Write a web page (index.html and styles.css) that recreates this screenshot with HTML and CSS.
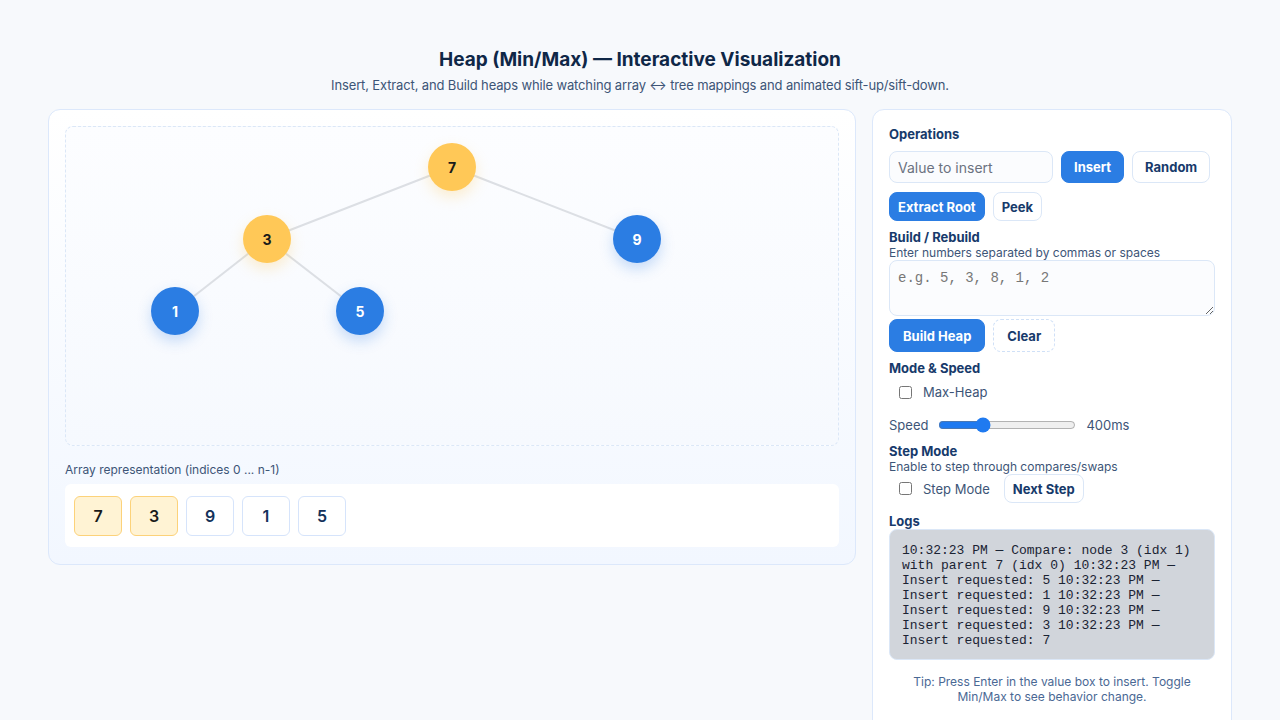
FILE: index.html
```html
<!DOCTYPE html>
<html lang="en">
<head>
<meta charset="utf-8">
<title>Heap (Min/Max) — Interactive Visualization</title>
<link rel="stylesheet" href="styles.css">
</head>
<body>
<header class="page-head">
  <h1 class="title">Heap (Min/Max) — Interactive Visualization</h1>
  <p class="subtitle">Insert, Extract, and Build heaps while watching array ↔ tree mappings and animated sift-up/sift-down.</p>
</header>
<main class="layout">
  <section class="viz-card">
    <div class="canvas">
      <svg class="edges" width="772" height="318" viewBox="0 0 772 318">
        <line x1="386" y1="40" x2="201" y2="112"/>
        <line x1="386" y1="40" x2="571" y2="112"/>
        <line x1="201" y1="112" x2="109" y2="184"/>
        <line x1="201" y1="112" x2="294" y2="184"/>
      </svg>
      <div class="node node-hl" style="left:362px;top:16px">7</div>
      <div class="node node-hl" style="left:177px;top:88px">3</div>
      <div class="node" style="left:547px;top:88px">9</div>
      <div class="node" style="left:85px;top:160px">1</div>
      <div class="node" style="left:270px;top:160px">5</div>
    </div>
    <div class="array-label">Array representation (indices 0 ... n-1)</div>
    <div class="array-box">
      <div class="cell cell-hl">7</div>
      <div class="cell cell-hl">3</div>
      <div class="cell">9</div>
      <div class="cell">1</div>
      <div class="cell">5</div>
    </div>
  </section>
  <aside class="panel">
    <h3 class="sec-title">Operations</h3>
    <div class="row row-first">
      <input class="text-input" type="text" placeholder="Value to insert">
      <button class="btn btn-primary btn-wide">Insert</button>
      <button class="btn btn-outline btn-wide">Random</button>
    </div>
    <div class="row row-second">
      <button class="btn btn-primary">Extract Root</button>
      <button class="btn btn-outline">Peek</button>
    </div>
    <h3 class="sec-title sec-build">Build / Rebuild</h3>
    <div class="hint">Enter numbers separated by commas or spaces</div>
    <textarea class="textarea" placeholder="e.g. 5, 3, 8, 1, 2"></textarea>
    <div class="row row-build">
      <button class="btn btn-primary btn-wide">Build Heap</button>
      <button class="btn btn-dashed btn-wide">Clear</button>
    </div>
    <h3 class="sec-title sec-mode">Mode &amp; Speed</h3>
    <label class="check-row"><input type="checkbox"> <span>Max-Heap</span></label>
    <div class="speed-row">
      <span>Speed</span>
      <input class="range" type="range" min="100" max="1100" value="400">
      <span>400ms</span>
    </div>
    <h3 class="sec-title sec-step">Step Mode</h3>
    <div class="hint">Enable to step through compares/swaps</div>
    <div class="step-row">
      <label class="check-row check-inline"><input type="checkbox"> <span>Step Mode</span></label>
      <button class="btn btn-outline">Next Step</button>
    </div>
    <h3 class="sec-title sec-logs">Logs</h3>
    <div class="logs">10:32:23 PM — Compare: node 3 (idx 1) with parent 7 (idx 0) 10:32:23 PM — Insert requested: 5 10:32:23 PM — Insert requested: 1 10:32:23 PM — Insert requested: 9 10:32:23 PM — Insert requested: 3 10:32:23 PM — Insert requested: 7</div>
    <p class="tip">Tip: Press Enter in the value box to insert. Toggle Min/Max to see behavior change.</p>
  </aside>
</main>
</body>
</html>
```

FILE: styles.css
```css
* { box-sizing: border-box; }
html, body { margin: 0; padding: 0; }
body {
  background: #f7f9fc;
  font-family: Inter, "Noto Sans", "Liberation Sans", sans-serif;
  color: #0f2a4a;
  min-height: 720px;
}
.page-head {
  text-align: center;
  padding-top: 48px;
}
.title {
  margin: 0;
  font-size: 19px;
  line-height: 24px;
  font-weight: 700;
  color: #0f2747;
}
.subtitle {
  margin: 5px 0 0;
  font-size: 13px;
  line-height: 16px;
  letter-spacing: -0.14px;
  color: #3d5577;
}
.layout {
  display: flex;
  gap: 16px;
  padding: 0 48px;
  margin-top: 16px;
  align-items: flex-start;
}
.viz-card {
  width: 808px;
  flex: none;
  border: 1px solid #dce8fb;
  border-radius: 12px;
  background: linear-gradient(180deg, #ffffff 0%, #f2f7ff 100%);
  padding: 16px 16px 17px;
}
.canvas {
  position: relative;
  height: 320px;
  border: 1px dashed #dbe7f7;
  border-radius: 8px;
  background: linear-gradient(180deg, #fcfdff 0%, #f6f9fe 100%);
}
.edges {
  position: absolute;
  left: 0;
  top: 0;
}
.edges line {
  stroke: #dcdfe4;
  stroke-width: 2;
}
.node {
  position: absolute;
  width: 48px;
  height: 48px;
  border-radius: 50%;
  background: #2b7de3;
  color: #ffffff;
  font-weight: 700;
  font-size: 14px;
  display: flex;
  align-items: center;
  justify-content: center;
  box-shadow: 0 6px 14px rgba(43, 125, 227, 0.25);
}
.node-hl {
  background: #ffc857;
  color: #1a1a1a;
  box-shadow: 0 6px 14px rgba(255, 200, 87, 0.28);
}
.array-label {
  margin-top: 16px;
  font-size: 12px;
  line-height: 16px;
  color: #3d5577;
}
.array-box {
  margin-top: 6px;
  background: #ffffff;
  border-radius: 6px;
  padding: 12px 9px 11px;
  display: flex;
  gap: 8px;
}
.cell {
  width: 48px;
  height: 40px;
  border: 1px solid #d6e4fb;
  border-radius: 6px;
  background: #ffffff;
  display: flex;
  align-items: center;
  justify-content: center;
  font-size: 16px;
  font-weight: 600;
  color: #14315a;
}
.cell-hl {
  background: #fff3d4;
  border-color: #fcd27a;
  color: #1a1a1a;
}
.panel {
  width: 360px;
  flex: none;
  background: #ffffff;
  border: 1px solid #dce8fb;
  border-radius: 12px;
  padding: 15px 16px 40px;
  min-height: 640px;
}
.sec-title {
  margin: 0;
  font-size: 13px;
  line-height: 18px;
  font-weight: 700;
  color: #173a6b;
}
.sec-build { margin-top: 8px; line-height: 17px; }
.sec-mode { margin-top: 7px; }
.sec-step { margin-top: 9px; }
.sec-logs { margin-top: 11px; line-height: 14px; }
.row {
  display: flex;
  gap: 8px;
  align-items: center;
}
.row-first { margin-top: 8px; }
.row-second { margin-top: 9px; }
.text-input {
  width: 164px;
  height: 32px;
  border: 1px solid #dbe7f7;
  border-radius: 8px;
  background: #fbfcfe;
  padding: 0 8px;
  font-family: inherit;
  font-size: 14px;
  color: #14315a;
}
.text-input::placeholder { color: #6b7280; }
.btn {
  font-family: inherit;
  font-size: 13px;
  font-weight: 700;
  border-radius: 8px;
  padding: 0 8px;
  height: 29px;
  cursor: pointer;
}
.btn-wide { padding: 0 13px; height: 33px; }
.row-first .btn { height: 32px; padding: 0 12px; }
.btn-primary {
  background: #2b7de3;
  color: #ffffff;
  border: 1px solid #2b7de3;
}
.btn-outline {
  background: #ffffff;
  color: #173a6b;
  border: 1px solid #dbe7f7;
}
.btn-dashed {
  background: #ffffff;
  color: #173a6b;
  border: 1px dashed #cfe0f7;
}
.hint {
  font-size: 12px;
  line-height: 14px;
  color: #3d5577;
}
.textarea {
  display: block;
  width: 100%;
  height: 56px;
  margin-top: 0;
  border: 1px solid #dbe7f7;
  border-radius: 8px;
  background: #fbfcfe;
  padding: 8px;
  font-family: "Liberation Mono", "DejaVu Sans Mono", monospace;
  font-size: 14px;
  line-height: 18px;
  resize: vertical;
}
.textarea::placeholder { color: #777; }
.row-build { margin-top: 3px; }
.check-row {
  display: flex;
  align-items: center;
  gap: 8px;
  padding-left: 6px;
  margin-top: 7px;
  font-size: 13px;
  color: #3d5577;
  line-height: 16px;
}
.check-row input { margin: 0 3px 0 4px; width: 13px; height: 13px; }
.speed-row {
  display: flex;
  align-items: center;
  gap: 10px;
  margin-top: 17px;
  height: 16px;
  font-size: 13px;
  color: #3d5577;
}
.range {
  width: 138px;
  margin: 0;
  accent-color: #1f7af0;
}
.step-row {
  display: flex;
  align-items: center;
  gap: 14px;
  margin-top: 0;
}
.check-inline { margin-top: 0; }
.logs {
  margin-top: 1px;
  background: #d1d5db;
  border: 1px solid #dbe7f7;
  border-radius: 8px;
  padding: 13px 12px 18px;
  font-family: "Liberation Mono", "Courier New", monospace;
  font-size: 13px;
  line-height: 15px;
  color: #1a2333;
  height: 131px;
}
.tip {
  margin: 14px 0 0;
  text-align: center;
  font-size: 12px;
  line-height: 15px;
  color: #4a6894;
}
```
